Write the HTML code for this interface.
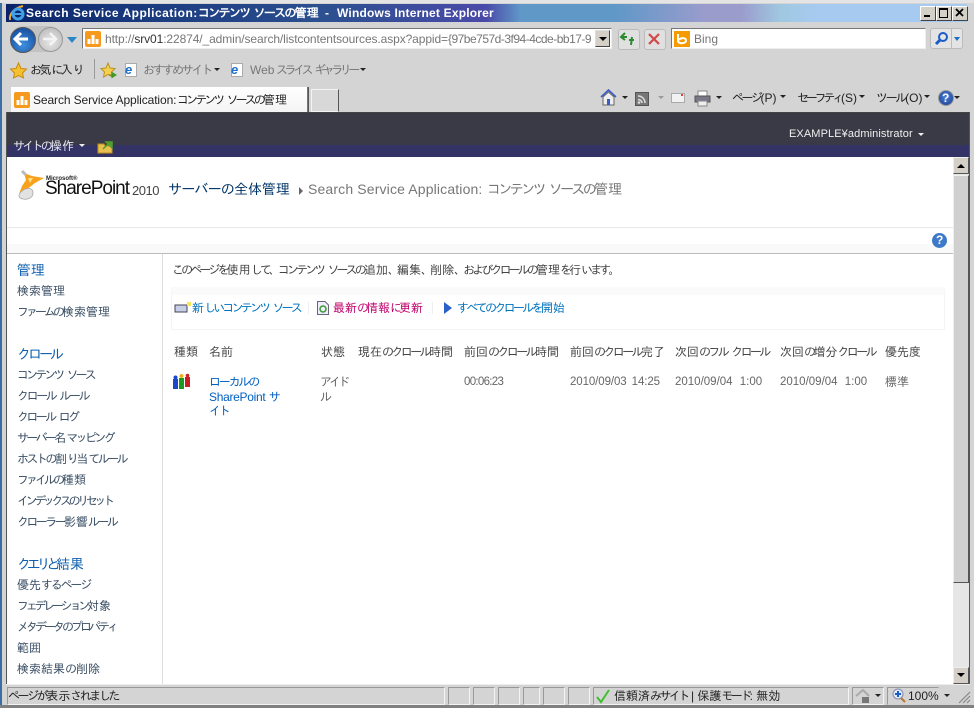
<!DOCTYPE html>
<html lang="ja"><head><meta charset="utf-8"><title>Search Service Application</title>
<style>
html,body{margin:0;padding:0;width:974px;height:708px;overflow:hidden;background:#d4d4d4}
body{position:relative;font-family:"Liberation Sans","IPAGothic","Noto Sans CJK JP",sans-serif;font-size:12px;color:#333}
.a{position:absolute}
.t{position:absolute;white-space:nowrap;line-height:14px;--k:-2.7px}
.t i{font-style:normal;letter-spacing:var(--k);word-spacing:calc(.7px - var(--k))}
svg{position:absolute;overflow:visible}
.nav{color:#3b4f65}
.h{color:#0f5fb0;font-size:14px}
.c{color:#444}
.d{color:#666;font-size:11.5px}
.lnk{color:#0072bc}
.st{position:absolute;top:687px;height:16px;border:1px solid #999;border-right-color:#f4f4f4;border-bottom-color:#f4f4f4}
.g{color:#777}
.k{color:#222}
.arr{position:absolute;width:0;height:0;border-left:3px solid transparent;border-right:3px solid transparent;border-top:3px solid #222}
</style></head><body>

<!-- window frame -->
<div class="a" style="left:0;top:0;width:2px;height:708px;background:#3a6ea5"></div>
<div class="a" style="left:0;top:0;width:974px;height:3px;background:#e4e4e4"></div>
<div class="a" style="left:0;top:705px;width:974px;height:3px;background:#808080"></div>

<!-- title bar -->
<div class="a" style="left:6px;top:4px;width:961px;height:18px;background:linear-gradient(90deg,#0a246a 0,#1c3c80 150px,#2c5090 320px,#4a4aa8 480px,#6098c8 515px,#6098c8 610px,#9a9ccc 700px,#9a9ccc 735px,#a0c8e0 775px,#a6caf0 810px,#a6caf0 961px)"></div>
<svg style="left:9px;top:5px" width="16" height="17" viewBox="0 0 16 17"><path d="M1 15C0 9 5 3 14 1" fill="none" stroke="#f0a830" stroke-width="2"/><circle cx="9" cy="9" r="5" fill="none" stroke="#3fa0e8" stroke-width="3"/><path d="M5 9h8" stroke="#3fa0e8" stroke-width="2"/></svg>
<div class="t" style="left:26px;top:6px;color:#fff;font-weight:bold;letter-spacing:.5px">Search Service Application:</div>
<div class="t" style="left:198px;top:6px;color:#fff;font-weight:bold;--k:-1.7px"><i>コンテンツ ソースの</i>管理</div>
<div class="t" style="left:325px;top:6px;color:#fff;font-weight:bold">-</div>
<div class="t" style="left:337px;top:6px;color:#fff;font-weight:bold;letter-spacing:.2px">Windows Internet Explorer</div>
<div class="a" style="left:920px;top:6px;width:14px;height:13px;background:#d4d0c8;border:1px solid #444;border-top-color:#fff;border-left-color:#fff"></div>
<div class="a" style="left:924px;top:15px;width:6px;height:2px;background:#000"></div>
<div class="a" style="left:936px;top:6px;width:14px;height:13px;background:#d4d0c8;border:1px solid #444;border-top-color:#fff;border-left-color:#fff"></div>
<div class="a" style="left:939px;top:8px;width:7px;height:7px;border:1px solid #000;border-top-width:2px"></div>
<div class="a" style="left:952px;top:6px;width:14px;height:13px;background:#d4d0c8;border:1px solid #444;border-top-color:#fff;border-left-color:#fff"></div>
<svg style="left:955px;top:8px" width="9" height="9"><path d="M1 1L8 8M8 1L1 8" stroke="#000" stroke-width="1.8"/></svg>

<!-- nav row -->
<div class="a" style="left:10px;top:26px;width:52px;height:26px;border-radius:13px;background:#c2c2c2"></div>
<div class="a" style="left:10px;top:27px;width:24px;height:24px;border-radius:50%;background:radial-gradient(circle at 50% 70%,#3f8fe0,#10408f);border:1px solid #555"></div>
<svg style="left:13px;top:31px" width="18" height="16"><path d="M2 8H15M8 2L2 8L8 14" fill="none" stroke="#fff" stroke-width="3"/></svg>
<div class="a" style="left:38px;top:27px;width:23px;height:23px;border-radius:50%;background:radial-gradient(circle at 50% 60%,#e8e8e8,#b4b4b4);border:1px solid #999"></div>
<svg style="left:41px;top:31px" width="18" height="16"><path d="M2 8H15M9 2L15 8L9 14" fill="none" stroke="#f4f4f4" stroke-width="2.4"/></svg>
<div class="a" style="left:67px;top:37px;width:0;height:0;border-left:5px solid transparent;border-right:5px solid transparent;border-top:6px solid #2a88c8"></div>

<div class="a" style="left:82px;top:28px;width:530px;height:21px;background:#fff;border:1px solid #777;border-right-color:#eee;border-bottom-color:#eee;box-sizing:border-box"></div>
<div class="a" style="left:85px;top:31px;width:16px;height:16px;background:#f59a1c;border-radius:2px"></div>
<svg style="left:86px;top:32px" width="14" height="14"><path d="M3 12V7M7 12V3M11 12V7" stroke="#fff" stroke-width="3"/></svg>
<div class="t" style="left:105px;top:32px;width:490px;overflow:hidden;color:#777;letter-spacing:-.1px">http://<span style="color:#333">srv01</span>:22874/_admin/search/listcontentsources.aspx?appid=<span style="letter-spacing:-.5px">{97be757d-3f94-4cde-bb17-9</span></div>
<div class="a" style="left:595px;top:30px;width:15px;height:17px;background:#d4d0c8;border:1px solid #444;border-top-color:#ddd;border-left-color:#ddd;box-sizing:border-box"></div>
<div class="a" style="left:599px;top:37px;width:0;height:0;border-left:4px solid transparent;border-right:4px solid transparent;border-top:4px solid #000"></div>

<div class="a" style="left:618px;top:29px;width:20px;height:19px;background:#e0e0e0;border:1px solid #bbb;border-radius:3px"></div>
<svg style="left:620px;top:31px" width="16" height="16"><path d="M1 6H7M5 2L1 6L5 9M14 9H9M12 6L11 14" fill="none" stroke="#2a8a30" stroke-width="2"/></svg>
<div class="a" style="left:644px;top:29px;width:20px;height:19px;background:#e0e0e0;border:1px solid #bbb;border-radius:3px"></div>
<svg style="left:648px;top:33px" width="12" height="12"><path d="M1 1L11 11M11 1L1 11" stroke="#d04848" stroke-width="2.2"/></svg>

<div class="a" style="left:671px;top:28px;width:255px;height:21px;background:#fff;border:1px solid #777;border-right-color:#eee;border-bottom-color:#eee;box-sizing:border-box"></div>
<div class="a" style="left:674px;top:31px;width:16px;height:16px;background:#f59a00"></div>
<svg style="left:675px;top:32px" width="14" height="14"><path d="M3 2V9C3 12 11 12 11 8.500C11 5.500 6 5.500 4 8" fill="none" stroke="#fff" stroke-width="2"/></svg>
<div class="t" style="left:694px;top:32px;color:#777">Bing</div>
<div class="a" style="left:930px;top:28px;width:33px;height:21px;background:#e4e4e4;border:1px solid #bbb;border-radius:3px;box-sizing:border-box"></div>
<div class="a" style="left:951px;top:29px;width:1px;height:19px;background:#bbb"></div>
<svg style="left:934px;top:31px" width="15" height="15"><circle cx="9" cy="6" r="4" fill="none" stroke="#1a5cc8" stroke-width="2"/><path d="M6 9L2 13" stroke="#1a5cc8" stroke-width="3"/></svg>
<div class="a" style="left:954px;top:37px;width:0;height:0;border-left:3.500px solid transparent;border-right:3.500px solid transparent;border-top:4px solid #1a6cc8"></div>

<!-- favorites row -->
<svg style="left:10px;top:62px" width="17" height="17"><path d="M8.500 1L11 6.500L16.500 7L12.500 11L13.500 16L8.500 13.500L3.500 16L4.500 11L.5 7L6 6.500Z" fill="#f5c030" stroke="#c88a10"/></svg>
<div class="t k" style="left:30px;top:63px"><i>お</i>気<i>に</i>入<i>り</i></div>
<div class="a" style="left:94px;top:59px;width:1px;height:20px;background:#999"></div>
<svg style="left:100px;top:62px" width="17" height="17"><path d="M8 1L10 6L15 6.500L11.500 10L12.500 15L8 12.500L3.500 15L4.500 10L1 6.500L6 6Z" fill="#f5d050" stroke="#b89020"/><path d="M9 13H14M12 10.500L16 13L12 15.500Z" fill="#50b030" stroke="#3a9020"/></svg>
<div class="a" style="left:125px;top:63px;width:12px;height:14px;background:#fff;border:1px solid #aaa;box-sizing:border-box"></div>
<div class="t" style="left:125px;top:63px;color:#1d6fc8;font-weight:bold;font-style:italic;font-size:13px">e</div>
<div class="t g" style="left:143px;top:63px;--k:-2.3px"><i>おすすめサイト</i></div>
<div class="arr" style="left:214px;top:68px"></div>
<div class="a" style="left:231px;top:63px;width:12px;height:14px;background:#fff;border:1px solid #aaa;box-sizing:border-box"></div>
<div class="t" style="left:231px;top:63px;color:#1d6fc8;font-weight:bold;font-style:italic;font-size:13px">e</div>
<div class="t g" style="left:250px;top:63px">Web</div>
<div class="t g" style="left:276px;top:63px;--k:-3.45px"><i>スライス ギャラリー</i></div>
<div class="arr" style="left:360px;top:68px"></div>

<!-- tab row -->
<div class="a" style="left:11px;top:87px;width:296px;height:25px;background:linear-gradient(#fff,#f4f4f4);border-right:1px solid #777"></div>
<div class="a" style="left:14px;top:92px;width:16px;height:16px;background:#f59a1c;border-radius:2px"></div>
<svg style="left:15px;top:93px" width="14" height="14"><path d="M3 12V7M7 12V3M11 12V7" stroke="#fff" stroke-width="3"/></svg>
<div class="t k" style="left:33px;top:93px;letter-spacing:-.1px">Search Service Application:</div>
<div class="t k" style="left:177px;top:93px;--k:-2.9px"><i>コンテンツ ソースの</i>管理</div>
<div class="a" style="left:308px;top:87px;width:1px;height:25px;background:#555"></div>
<div class="a" style="left:311px;top:89px;width:28px;height:23px;background:#d8d8d8;border:1px solid #f4f4f4;border-right:1px solid #555;box-sizing:border-box"></div>

<!-- command bar -->
<svg style="left:600px;top:89px" width="17" height="17"><path d="M1 8L8.500 1L16 8" fill="none" stroke="#3a5cc8" stroke-width="1.600"/><path d="M3 8V16H14V8L8.500 3Z" fill="#eee" stroke="#666"/><rect x="7" y="10" width="3" height="6" fill="#3a5cc8"/></svg>
<div class="arr" style="left:622px;top:96px"></div>
<div class="a" style="left:635px;top:92px;width:14px;height:14px;background:#777;border:1px solid #555;box-sizing:border-box"></div>
<svg style="left:636px;top:93px" width="12" height="12"><path d="M2 3C6 3 9 6 9 10M2 6.500C4 6.500 6 8 6 10" fill="none" stroke="#ddd" stroke-width="1.500"/><circle cx="3" cy="9.500" r="1.300" fill="#ddd"/></svg>
<div class="arr" style="left:658px;top:96px;border-top-color:#999"></div>
<div class="a" style="left:671px;top:93px;width:14px;height:10px;background:#f2f2f2;border:1px solid #aaa;box-sizing:border-box"></div>
<div class="a" style="left:681px;top:94px;width:2px;height:2px;background:#e04040"></div>
<svg style="left:694px;top:90px" width="17" height="17"><rect x="4" y="1" width="9" height="5" fill="#fff" stroke="#888"/><rect x="1" y="6" width="15" height="6" fill="#778" stroke="#555"/><rect x="4" y="11" width="9" height="5" fill="#eee" stroke="#888"/></svg>
<div class="arr" style="left:716px;top:96px"></div>
<div class="t k" style="left:732px;top:91px;--k:-2.5px"><i>ページ</i>(P)</div>
<div class="arr" style="left:780px;top:95px"></div>
<div class="t k" style="left:797px;top:91px;--k:-3.2px"><i>セーフティ</i>(S)</div>
<div class="arr" style="left:859px;top:95px"></div>
<div class="t k" style="left:876px;top:91px;--k:-2.3px"><i>ツール</i>(O)</div>
<div class="arr" style="left:924px;top:95px"></div>
<div class="a" style="left:938px;top:90px;width:16px;height:16px;border-radius:50%;background:radial-gradient(circle at 50% 40%,#4a80d8,#1a3c90);border:1px solid #999;box-sizing:border-box"></div>
<div class="t" style="left:942px;top:91px;color:#fff;font-weight:bold">?</div>
<div class="arr" style="left:954px;top:96px"></div>

<!-- page -->
<div class="a" style="left:6px;top:112px;width:964px;height:572px;background:#fff;border-top:1px solid #444;border-right:1px solid #555;box-sizing:border-box"></div>
<div class="a" style="left:6px;top:112px;width:1px;height:572px;background:#555"></div>
<div class="a" style="left:7px;top:113px;width:962px;height:32px;background:#3a3a46"></div>
<div class="a" style="left:7px;top:145px;width:962px;height:12px;background:#333366"></div>
<div class="t" style="left:13px;top:139px;color:#e8e8f0;--k:-2.75px"><i>サイトの</i>操作</div>
<div class="a" style="left:79px;top:144px;width:0;height:0;border-left:3px solid transparent;border-right:3px solid transparent;border-top:3px solid #eee"></div>
<svg style="left:98px;top:139px" width="16" height="15"><path d="M0 5H6L7 7H14V14H0Z" fill="#e8c050" stroke="#c09020"/><path d="M5 10L11 4M8 3H14V9Z" fill="#50a030" stroke="#50a030" stroke-width="1.500"/></svg>
<div class="t" style="left:789px;top:127px;color:#f0f0f0;font-size:11px;letter-spacing:.1px">EXAMPLE¥administrator</div>
<div class="a" style="left:918px;top:133px;width:0;height:0;border-left:3px solid transparent;border-right:3px solid transparent;border-top:3px solid #eee"></div>

<!-- logo -->
<svg style="left:17px;top:170px" width="28" height="30"><path d="M7 3L15 6L27 8L18 13L9 20L2 24L5 16L9 10Z" fill="#f9a11c"/><path d="M11 8L16 8L13 13Z" fill="#fde08a"/><path d="M4 22C9 17 16 17 16 23C16 28 10 30 6 29C1 28 1 25 4 22Z" fill="#e2e2e2" stroke="#aaa" stroke-width=".8"/><path d="M5 1L9 5" stroke="#bbb" stroke-width="3"/></svg>
<div class="t" style="left:46px;top:175px;color:#222;font-size:6px;font-weight:bold;line-height:8px">Microsoft®</div>
<div class="t" style="left:45px;top:178px;color:#111;font-size:19px;line-height:22px;letter-spacing:-1px">SharePoint</div>
<div class="t" style="left:132px;top:183px;color:#444;font-size:13px;line-height:16px;letter-spacing:-.5px">2010</div>
<div class="t" style="left:168px;top:181px;color:#003366;font-size:14px;line-height:16px;--k:-.8px"><i>サーバーの</i>全体管理</div>
<div class="a" style="left:299px;top:187px;width:0;height:0;border-top:4px solid transparent;border-bottom:4px solid transparent;border-left:4px solid #666"></div>
<div class="t" style="left:308px;top:181px;color:#777;font-size:14px;line-height:16px;letter-spacing:.15px">Search Service Application:</div>
<div class="t" style="left:487px;top:181px;color:#777;font-size:14px;line-height:16px;--k:-2.6px"><i>コンテンツ ソースの</i>管理</div>
<div class="a" style="left:7px;top:227px;width:946px;height:1px;background:#e8e8e8"></div>
<div class="a" style="left:7px;top:244px;width:946px;height:9px;background:#f9f9f9"></div>
<div class="a" style="left:7px;top:253px;width:946px;height:1px;background:#bbb"></div>
<div class="a" style="left:932px;top:233px;width:15px;height:15px;border-radius:50%;background:#3e78c8"></div>
<div class="t" style="left:936px;top:233px;color:#fff;font-weight:bold">?</div>
<div class="a" style="left:162px;top:254px;width:1px;height:430px;background:#ddd"></div>

<!-- left nav -->
<div class="t h" style="left:17px;top:263px">管理</div>
<div class="t nav" style="left:17px;top:284px">検索管理</div>
<div class="t nav" style="left:17px;top:305px;--k:-3px"><i>ファームの</i>検索管理</div>
<div class="t h" style="left:17px;top:347px;--k:-3px"><i>クロール</i></div>
<div class="t nav" style="left:17px;top:368px;--k:-2.9px"><i>コンテンツ ソース</i></div>
<div class="t nav" style="left:17px;top:389px;--k:-2.4px"><i>クロール ルール</i></div>
<div class="t nav" style="left:17px;top:410px;--k:-2.6px"><i>クロール ログ</i></div>
<div class="t nav" style="left:17px;top:431px;--k:-2.67px"><i>サーバー</i>名<i>マッピング</i></div>
<div class="t nav" style="left:17px;top:452px;--k:-2.55px"><i>ホストの</i>割<i>り</i>当<i>てルール</i></div>
<div class="t nav" style="left:17px;top:473px;--k:-3px"><i>ファイルの</i>種類</div>
<div class="t nav" style="left:17px;top:494px;--k:-3.4px"><i>インデックスのリセット</i></div>
<div class="t nav" style="left:17px;top:515px;--k:-2.6px"><i>クローラー</i>影響<i>ルール</i></div>
<div class="t h" style="left:17px;top:557px;--k:-4.25px"><i>クエリと</i>結果</div>
<div class="t nav" style="left:17px;top:578px;--k:-2.2px">優先<i>するページ</i></div>
<div class="t nav" style="left:17px;top:599px;--k:-3.25px"><i>フェデレーション</i>対象</div>
<div class="t nav" style="left:17px;top:620px;--k:-3px"><i>メタデータのプロパティ</i></div>
<div class="t nav" style="left:17px;top:641px">範囲</div>
<div class="t nav" style="left:17px;top:662px;--k:-1px">検索結果<i>の</i>削除</div>

<!-- main -->
<div class="t c" style="left:172px;top:263px;--k:-2.9px"><i>このページを</i>使用<i>して、コンテンツ ソースの</i>追加<i>、</i>編集<i>、</i>削除<i>、およびクロールの</i>管理<i>を</i>行<i>います。</i></div>
<div class="a" style="left:171px;top:287px;width:774px;height:43px;box-sizing:border-box;border:1px solid #f4f4f4;border-top:8px solid #fafafa"></div>
<svg style="left:175px;top:302px" width="16" height="13"><rect x="0" y="3" width="12" height="7" fill="#c8d0e8" stroke="#445"/><path d="M12 0L16 0V4L12 4Z" fill="#f8e858"/></svg>
<div class="t lnk" style="left:192px;top:301px;--k:-2.8px">新<i>しいコンテンツ ソース</i></div>
<div class="a" style="left:308px;top:302px;width:1px;height:12px;background:#eee"></div>
<svg style="left:317px;top:301px" width="12" height="14"><path d="M.5 .5H8L11.500 4V13.500H.5Z" fill="#eef" stroke="#667"/><circle cx="6" cy="8" r="3" fill="none" stroke="#3a9a30" stroke-width="1.500"/></svg>
<div class="t" style="left:333px;top:301px;color:#c0006a;--k:-3px">最新<i>の</i>情報<i>に</i>更新</div>
<div class="a" style="left:432px;top:302px;width:1px;height:12px;background:#eee"></div>
<div class="a" style="left:444px;top:302px;width:0;height:0;border-top:6px solid transparent;border-bottom:6px solid transparent;border-left:8px solid #2a60c8"></div>
<div class="t lnk" style="left:457px;top:301px;--k:-2.67px"><i>すべてのクロールを</i>開始</div>

<div class="t c" style="left:174px;top:345px">種類</div>
<div class="t c" style="left:209px;top:345px">名前</div>
<div class="t c" style="left:321px;top:345px">状態</div>
<div class="t c" style="left:358px;top:345px;--k:-2.6px">現在<i>のクロール</i>時間</div>
<div class="t c" style="left:464px;top:345px;--k:-2.6px">前回<i>のクロール</i>時間</div>
<div class="t c" style="left:570px;top:345px;--k:-2.6px">前回<i>のクロール</i>完了</div>
<div class="t c" style="left:675px;top:345px;--k:-2.6px">次回<i>のフル クロール</i></div>
<div class="t c" style="left:780px;top:345px;--k:-2.6px">次回<i>の</i>増分<i>クロール</i></div>
<div class="t c" style="left:885px;top:345px">優先度</div>

<svg style="left:173px;top:374px" width="17" height="16"><rect x="0" y="5" width="5" height="10" fill="#1a48c8"/><circle cx="2.500" cy="3.500" r="2" fill="#1a48c8"/><rect x="6" y="4" width="5" height="11" fill="#1a9a20"/><circle cx="8.500" cy="2" r="2" fill="#e8b020"/><rect x="12" y="3" width="5" height="10" fill="#c82020"/><circle cx="14.500" cy="1.500" r="1.800" fill="#c82020"/></svg>
<div class="t" style="left:209px;top:375px;line-height:14.500px;color:#0060c0;--k:-2.2px"><i>ローカルの</i><br><span style="letter-spacing:-.3px">SharePoint</span> サ<br><i>イト</i></div>
<div class="t" style="left:320px;top:375px;line-height:14.500px;color:#666;--k:-3px"><i>アイド</i><br>ル</div>
<div class="t d" style="left:464px;top:375px;letter-spacing:-.7px">00:06:23</div>
<div class="t d" style="left:570px;top:375px;letter-spacing:-.1px;word-spacing:2px">2010/09/03 14:25</div>
<div class="t d" style="left:675px;top:375px;word-spacing:4px">2010/09/04 1:00</div>
<div class="t d" style="left:780px;top:375px;word-spacing:4px">2010/09/04 1:00</div>
<div class="t d" style="left:885px;top:375px;font-size:12px">標準</div>

<!-- scrollbar -->
<div class="a" style="left:953px;top:157px;width:16px;height:527px;background:#e6e6e6"></div>
<div class="a" style="left:953px;top:157px;width:16px;height:17px;background:#d4d0c8;border:1px solid #555;border-top-color:#eee;border-left-color:#eee;box-sizing:border-box"></div>
<div class="a" style="left:957px;top:164px;width:0;height:0;border-left:4px solid transparent;border-right:4px solid transparent;border-bottom:4px solid #000"></div>
<div class="a" style="left:953px;top:175px;width:16px;height:408px;background:#d0d0d0;border:1px solid #555;border-top-color:#eee;border-left-color:#eee;box-sizing:border-box"></div>
<div class="a" style="left:953px;top:667px;width:16px;height:17px;background:#d4d0c8;border:1px solid #555;border-top-color:#eee;border-left-color:#eee;box-sizing:border-box"></div>
<div class="a" style="left:957px;top:673px;width:0;height:0;border-left:4px solid transparent;border-right:4px solid transparent;border-top:4px solid #000"></div>

<!-- status bar -->
<div class="a" style="left:6px;top:684px;width:964px;height:21px;background:#d4d4d4;border-top:1px solid #eee;box-sizing:border-box"></div>
<div class="st" style="left:7px;width:436px"></div>
<div class="t k" style="left:8px;top:689px;--k:-2.45px"><i>ページが</i>表示<i>されました</i></div>
<div class="st" style="left:448px;width:20px"></div>
<div class="st" style="left:473px;width:20px"></div>
<div class="st" style="left:498px;width:20px"></div>
<div class="st" style="left:523px;width:15px"></div>
<div class="st" style="left:543px;width:20px"></div>
<div class="st" style="left:568px;width:20px"></div>
<div class="st" style="left:593px;width:254px"></div>
<svg style="left:595px;top:688px" width="16" height="16"><path d="M2 9L6 14L14 2" fill="none" stroke="#40c030" stroke-width="2"/></svg>
<div class="t k" style="left:614px;top:689px;--k:-2.6px">信頼済<i>みサイト</i> | 保護<i>モード</i>: 無効</div>
<div class="st" style="left:852px;width:30px"></div>
<svg style="left:855px;top:689px" width="16" height="15"><path d="M1 7L8 1L14 7" fill="none" stroke="#aaa" stroke-width="2"/><rect x="7" y="8" width="7" height="6" fill="#777"/></svg>
<div class="arr" style="left:875px;top:694px"></div>
<div class="st" style="left:887px;width:50px;border-right-color:#d4d4d4;border-bottom-color:#d4d4d4"></div>
<svg style="left:892px;top:688px" width="14" height="15"><circle cx="6" cy="6" r="5" fill="#dde8f8" stroke="#88a"/><path d="M3 6H9M6 3V9" stroke="#1a5cc8" stroke-width="2"/><path d="M9 10L13 14" stroke="#b87830" stroke-width="2"/></svg>
<div class="t k" style="left:908px;top:689px">100%</div>
<div class="arr" style="left:944px;top:694px"></div>
<svg style="left:958px;top:691px" width="13" height="13"><path d="M12 1L1 12M12 5L5 12M12 9L9 12" stroke="#888" stroke-width="1.200"/></svg>
</body></html>
